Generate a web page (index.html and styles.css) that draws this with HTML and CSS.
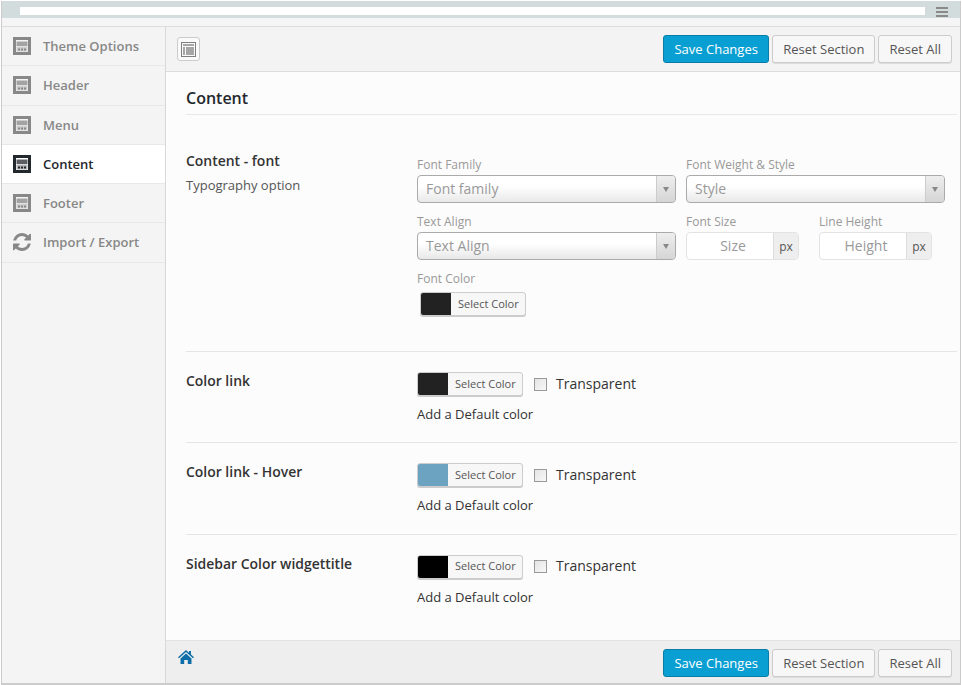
FILE: index.html
```html
<!DOCTYPE html>
<html>

<head>
  <meta charset="UTF-8">
  <title>Theme Options</title>
  <link rel="stylesheet" href="styles.css">
</head>

<body>
  <svg class="defs">
    <symbol id="layout" viewBox="0 0 18 18">
      <path fill-rule="evenodd" d="M0 0h18v18H0zM3 3v12h12V3z" />
      <path d="M3.500 4.500h11v4.500h-11z" opacity=".75" />
      <path d="M3.500 9.500h11v5h-11z" opacity=".35" />
      <path d="M5 11.500h2v2H5zM8 11.500h2v2H8zM11 11.500h2v2h-2z" />
    </symbol>
  </svg>

  <div class="frame">
    <div class="topbar">
      <div class="topbar-field"></div>
      <div class="burger"><span></span><span></span><span></span></div>
    </div>

    <div class="panel">
      <ul class="nav">
        <li class="nav-item"><svg class="nav-icon"><use href="#layout" /></svg>Theme Options</li>
        <li class="nav-item"><svg class="nav-icon"><use href="#layout" /></svg>Header</li>
        <li class="nav-item"><svg class="nav-icon"><use href="#layout" /></svg>Menu</li>
        <li class="nav-item active"><svg class="nav-icon"><use href="#layout" /></svg>Content</li>
        <li class="nav-item"><svg class="nav-icon"><use href="#layout" /></svg>Footer</li>
        <li class="nav-item">
          <svg class="nav-icon" viewBox="128 128 1536 1536">
            <path d="M1639 1056q0 5-1 7-64 268-268 434.500t-478 166.500q-146 0-282.500-55t-243.500-157l-129 129q-19 19-45 19t-45-19-19-45v-448q0-26 19-45t45-19h448q26 0 45 19t19 45-19 45l-137 137q71 66 161 102t187 36q134 0 250-65t186-179q11-17 53-117 8-23 30-23h192q13 0 22.500 9.500t9.500 22.500zm25-800v448q0 26-19 45t-45 19h-448q-26 0-45-19t-19-45 19-45l138-138q-148-137-349-137-134 0-250 65t-186 179q-11 17-53 117-8 23-30 23h-199q-13 0-22.500-9.500t-9.500-22.500v-7q65-268 270-434.500t480-166.500q146 0 284 55.500t245 156.500l130-129q19-19 45-19t45 19 19 45z" />
          </svg>Import / Export
        </li>
      </ul>

      <div class="main">
        <div class="toolbar">
          <span class="expand">
            <svg width="15" height="15" viewBox="0 0 15 15">
              <path fill="#808080" fill-rule="evenodd" d="M0 0h15v15H0zM1 1v13h13V1z" />
              <path fill="#a6a6a6" d="M2 2h11v2H2zM2 5h2v8H2zM5 5h8v8H5z" />
            </svg>
          </span>
          <div class="actions">
            <button class="btn primary">Save Changes</button>
            <button class="btn">Reset Section</button>
            <button class="btn">Reset All</button>
          </div>
        </div>

        <div class="content">
          <h2 class="section-title">Content</h2>

          <div class="row row-font">
            <div class="row-label">
              <h3>Content - font</h3>
              <p>Typography option</p>
            </div>
            <div class="typo">
              <div class="field">
                <label>Font Family</label>
                <div class="select">
                  <span>Font family</span><i class="select-arrow"></i>
                </div>
              </div>
              <div class="field">
                <label>Font Weight &amp; Style</label>
                <div class="select">
                  <span>Style</span><i class="select-arrow"></i>
                </div>
              </div>
              <div class="field">
                <label>Text Align</label>
                <div class="select">
                  <span>Text Align</span><i class="select-arrow"></i>
                </div>
              </div>
              <div class="size-fields">
                <div class="field">
                  <label>Font Size</label>
                  <div class="unit-input"><span>Size</span><b>px</b></div>
                </div>
                <div class="field">
                  <label>Line Height</label>
                  <div class="unit-input"><span>Height</span><b>px</b></div>
                </div>
              </div>
              <div class="field font-color">
                <label>Font Color</label>
                <div class="color-btn"><i class="swatch dark"></i><span>Select Color</span></div>
              </div>
            </div>
          </div>

          <div class="row row-color">
            <h3>Color link</h3>
            <div>
              <div class="color-line">
                <div class="color-btn"><i class="swatch dark"></i><span>Select Color</span></div>
                <i class="check"></i><span class="transparent">Transparent</span>
              </div>
              <p class="default-color">Add a Default color</p>
            </div>
          </div>

          <div class="row row-color">
            <h3>Color link - Hover</h3>
            <div>
              <div class="color-line">
                <div class="color-btn"><i class="swatch blue"></i><span>Select Color</span></div>
                <i class="check"></i><span class="transparent">Transparent</span>
              </div>
              <p class="default-color">Add a Default color</p>
            </div>
          </div>

          <div class="row row-color last">
            <h3>Sidebar Color widgettitle</h3>
            <div>
              <div class="color-line">
                <div class="color-btn"><i class="swatch black"></i><span>Select Color</span></div>
                <i class="check"></i><span class="transparent">Transparent</span>
              </div>
              <p class="default-color">Add a Default color</p>
            </div>
          </div>
        </div>

        <div class="toolbar bottom">
          <svg class="home" width="16" height="16" viewBox="0 0 16 16">
            <path fill="#0f6ea8" d="M8 1 L11 3.700V2h2v3.500L16 8.200 15 9.300 8 3 1 9.300 0 8.200zM2.500 9.500 8 4.500l5.500 5V15H9.800v-4H6.200v4H2.500z" />
          </svg>
          <div class="actions">
            <button class="btn primary">Save Changes</button>
            <button class="btn">Reset Section</button>
            <button class="btn">Reset All</button>
          </div>
        </div>
      </div>
    </div>
  </div>
</body>

</html>
```

FILE: styles.css
```css
body {
  font-family: "Open Sans", sans-serif;
  font-size: 13px;
  color: #333;
  background-color: #fff;
  margin: 0;
}

.defs {
  display: none;
}

.frame {
  width: 960px;
  height: 684px;
  margin: 1px 0 0 1px;
  border: 1px solid #ccc;
  border-width: 0 1px 2px 1px;
  box-sizing: border-box;
  display: flex;
  flex-direction: column;
}

.topbar {
  height: 26px;
  flex: none;
  box-sizing: border-box;
  background: linear-gradient(#d3dcdc 17px, #f5f5f5 17px);
  border-bottom: 1px solid #ddd;
  display: flex;
  align-items: flex-start;
  padding: 6px 12px 0 18px;
}

.topbar-field {
  flex: 1;
  height: 8px;
  background-color: #fff;
}

.burger {
  width: 12px;
  margin-left: 11px;
  display: flex;
  flex-direction: column;
  gap: 2px;
}

.burger span {
  height: 2px;
  background-color: #8a8a8a;
}

.panel {
  flex: 1;
  display: flex;
  min-height: 0;
}

.nav {
  width: 163px;
  flex: none;
  margin: 0;
  padding: 0;
  list-style: none;
  background-color: #f4f4f4;
  border-right: 1px solid #d8d8d8;
}

.nav-item {
  height: 39.250px;
  box-sizing: border-box;
  border-bottom: 1px solid #e8e8e8;
  display: flex;
  align-items: center;
  padding-left: 11px;
  font-weight: 600;
  color: #888;
  fill: #888;
}

.nav-item.active {
  background-color: #fff;
  color: #23282d;
  fill: #23282d;
}

.nav-icon {
  width: 18px;
  height: 18px;
  margin-right: 12px;
}

.main {
  flex: 1;
  min-width: 0;
  display: flex;
  flex-direction: column;
  background-color: #fcfcfc;
}

.toolbar {
  height: 45px;
  flex: none;
  box-sizing: border-box;
  background-color: #f3f3f3;
  border-bottom: 1px solid #ddd;
  display: flex;
  align-items: center;
  justify-content: space-between;
  padding: 0 8px 0 11px;
}

.toolbar.bottom {
  height: 43px;
  background-color: #eee;
  border-bottom: 0;
  border-top: 1px solid #e2e2e2;
  padding-top: 2px;
  padding-left: 12px;
}

.expand {
  width: 23px;
  height: 24px;
  box-sizing: border-box;
  border: 1px solid #ccc;
  border-radius: 3px;
  background-color: #fafafa;
  display: flex;
  align-items: center;
  justify-content: center;
}

.home {
  align-self: flex-start;
  margin-top: 6px;
}

.actions {
  display: flex;
  gap: 3px;
}

.btn {
  height: 28px;
  padding: 0 10px;
  font-family: inherit;
  font-size: 13px;
  color: #555;
  background-color: #f7f7f7;
  border: 1px solid #ccc;
  border-radius: 3px;
  box-shadow: 0 1px 0 #ddd;
}

.btn.primary {
  width: 106px;
  padding: 0;
  color: #fff;
  background-color: #0a9fd3;
  border-color: #0a7ca8;
  box-shadow: none;
}

.content {
  flex: 1;
  min-height: 0;
  padding: 15px 3px 0 20px;
}

.section-title {
  margin: 0;
  padding-bottom: 4px;
  font-size: 16px;
  line-height: 23px;
  font-weight: 600;
  color: #23282d;
  border-bottom: 1px solid #e8e8e8;
}

.row {
  display: flex;
  border-bottom: 1px solid #e5e5e5;
}

.row.last {
  border-bottom: 0;
}

.row h3 {
  margin: 0;
  font-size: 13.950px;
  line-height: 20px;
  font-weight: 600;
  color: #333;
}

.row-label {
  width: 231px;
  flex: none;
}

.row-label p {
  margin: 4px 0 0;
  line-height: 20px;
  color: #555;
}

.row-font {
  height: 237px;
  box-sizing: border-box;
  padding-top: 36px;
}

.typo {
  width: 528px;
  display: grid;
  grid-template-columns: 259px 259px;
  column-gap: 10px;
  row-gap: 10px;
  margin-top: 5px;
  align-content: start;
}

.field label {
  display: block;
  height: 19px;
  font-size: 12px;
  line-height: 18px;
  color: #999;
}

.select {
  height: 28px;
  box-sizing: border-box;
  border: 1px solid #aaa;
  border-radius: 4px;
  background: linear-gradient(#fff 40%, #e8e8e8);
  display: flex;
  align-items: center;
  justify-content: space-between;
  padding-left: 8px;
  font-size: 14px;
  color: #999;
}

.select span {
  padding-bottom: 2px;
}

.select-arrow {
  width: 18px;
  height: 26px;
  position: relative;
  border-left: 1px solid #ccc;
  border-radius: 0 3px 3px 0;
  background: linear-gradient(#eee, #d5d5d5);
}

.select-arrow::after {
  content: "";
  position: absolute;
  left: 6px;
  top: 11px;
  border: 3px solid transparent;
  border-top: 5px solid #888;
  border-bottom: 0;
}

.size-fields {
  display: grid;
  grid-template-columns: 113px 113px;
  column-gap: 20px;
}

.unit-input {
  height: 28px;
  box-sizing: border-box;
  border: 1px solid #e3e3e3;
  border-radius: 4px;
  background-color: #fff;
  display: flex;
  align-items: center;
  padding-left: 6px;
  font-size: 14px;
  color: #999;
}

.unit-input span {
  flex: 1;
  padding-bottom: 2px;
  text-align: center;
}

.unit-input b {
  width: 25px;
  height: 26px;
  box-sizing: border-box;
  background-color: #eee;
  border-left: 1px solid #ddd;
  border-radius: 0 3px 3px 0;
  font-size: 12px;
  font-weight: 400;
  line-height: 27px;
  text-align: center;
  color: #555;
}

.font-color {
  grid-column: 1 / 3;
}

.font-color .color-btn {
  margin: 3px 0 0 3px;
}

.color-btn {
  width: 106px;
  height: 24px;
  box-sizing: border-box;
  border: 1px solid #ccc;
  border-radius: 3px;
  background-color: #f7f7f7;
  box-shadow: 0 1px 0 #ccc;
  display: flex;
  align-items: center;
  font-size: 11px;
  color: #555;
  overflow: hidden;
}

.color-btn span {
  padding-bottom: 2px;
}

.swatch {
  width: 30px;
  height: 24px;
  margin-right: 7px;
}

.swatch.dark {
  background-color: #222;
}

.swatch.blue {
  background-color: #6ba3c0;
}

.swatch.black {
  background-color: #000;
}

.row-color {
  height: 91.400px;
  box-sizing: border-box;
  padding-top: 20px;
}

.row-color h3 {
  width: 231px;
  flex: none;
  margin-top: -1px;
}

.color-line {
  display: flex;
  align-items: center;
}

.check {
  width: 13px;
  height: 13px;
  box-sizing: border-box;
  margin: 0 9px 0 11px;
  border: 1px solid #999;
  background: linear-gradient(135deg, #e4e4e4, #f8f8f8);
}

.transparent {
  padding-bottom: 2px;
  font-size: 14px;
  color: #333;
}

.default-color {
  margin: 9px 0 0;
  line-height: 18px;
  color: #333;
}
```
